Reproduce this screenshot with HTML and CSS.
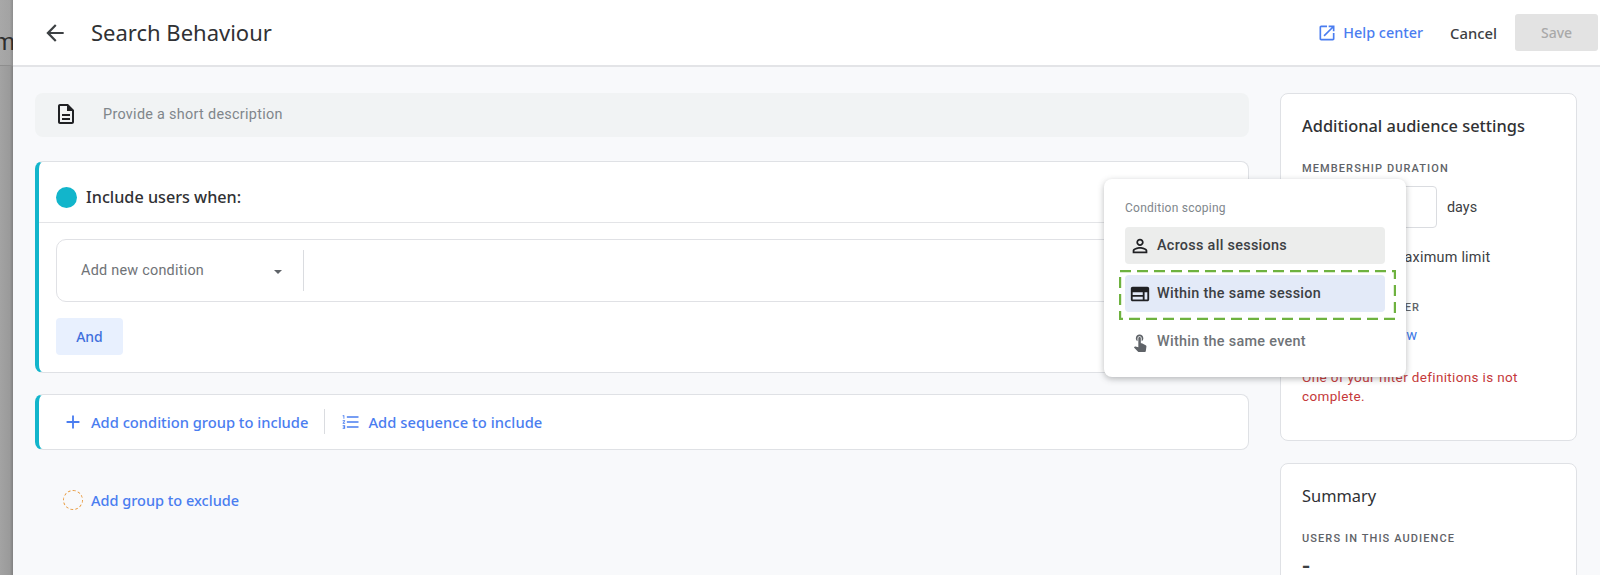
FILE: index.html
```html
<!DOCTYPE html>
<html lang="en">
<head>
  <meta charset="UTF-8" />
  <title>Search Behaviour</title>
  <link rel="stylesheet" href="styles.css">
</head>
<body>

  <!-- Page behind the panel -->
  <div class="scrim">
    <div class="scrim-top"><span>m</span></div>
  </div>

  <div class="panel">
    <header class="topbar">
      <svg class="back-icon" viewBox="0 0 24 24"><path d="M20 11H7.83l5.59-5.59L12 4l-8 8 8 8 1.41-1.41L7.83 13H20v-2z"/></svg>
      <h1>Search Behaviour</h1>
      <a class="help">
        <svg viewBox="0 0 24 24"><path d="M19 19H5V5h7V3H5c-1.11 0-2 .9-2 2v14c0 1.1.89 2 2 2h14c1.1 0 2-.9 2-2v-7h-2v7zM14 3v2h3.59l-9.83 9.83 1.41 1.41L19 6.41V10h2V3h-7z"/></svg>
        Help center
      </a>
      <span class="cancel">Cancel</span>
      <span class="save">Save</span>
    </header>

    <div class="content">
      <div class="builder">
        <div class="description">
          <svg viewBox="0 0 24 24"><path d="M8 16h8v2H8zm0-4h8v2H8zm6-10H6c-1.1 0-2 .9-2 2v16c0 1.1.89 2 1.99 2H18c1.1 0 2-.9 2-2V8l-6-6zm4 18H6V4h7v5h5v11z"/></svg>
          <span>Provide a short description</span>
        </div>

        <section class="group">
          <div class="group-head">
            <i class="dot"></i>
            <span>Include users when:</span>
          </div>
          <div class="group-body">
            <div class="condition">
              <div class="condition-select">
                <span>Add new condition</span>
                <i class="caret"></i>
              </div>
            </div>
            <span class="and">And</span>
          </div>
        </section>

        <section class="group add-row">
          <a class="link">
            <svg viewBox="0 0 24 24"><path d="M19 13h-6v6h-2v-6H5v-2h6V5h2v6h6v2z"/></svg>
            Add condition group to include
          </a>
          <i class="add-sep"></i>
          <a class="link seq">
            <svg class="list-icon" viewBox="0 0 24 24"><path d="M2 17h2v.5H3v1h1v.5H2v1h3v-4H2v1zm1-9h1V4H2v1h1v3zm-1 3h1.8L2 13.1v.9h3v-1H3.2L5 10.9V10H2v1zm5-6v2h14V5H7zm0 14h14v-2H7v2zm0-6h14v-2H7v2z"/></svg>
            Add sequence to include
          </a>
        </section>

        <a class="link exclude">
          <i class="dashed-dot"></i>
          Add group to exclude
        </a>
      </div>

      <aside class="side">
        <div class="card settings">
          <h2>Additional audience settings</h2>
          <div class="label">MEMBERSHIP DURATION</div>
          <div class="duration">
            <i class="duration-input"></i>
            <span>days</span>
          </div>
          <div class="limit">Set to maximum limit</div>
          <div class="label trigger">AUDIENCE TRIGGER</div>
          <a class="create">Create new</a>
          <p class="error">One of your filter definitions is not complete.</p>
        </div>
        <div class="card summary">
          <h2>Summary</h2>
          <div class="label">USERS IN THIS AUDIENCE</div>
          <div class="count">-</div>
        </div>
      </aside>
    </div>
  </div>

  <!-- Scoping menu -->
  <div class="menu">
    <div class="menu-title">Condition scoping</div>
    <div class="menu-item muted-bg">
      <svg viewBox="0 0 24 24"><path d="M12 5.9c1.16 0 2.1.94 2.1 2.1s-.94 2.1-2.1 2.1S9.9 9.16 9.9 8s.94-2.1 2.1-2.1m0 9c2.97 0 6.1 1.46 6.1 2.1v1.1H5.9V17c0-.64 3.13-2.1 6.1-2.1M12 4C9.79 4 8 5.79 8 8s1.79 4 4 4 4-1.79 4-4-1.79-4-4-4zm0 9c-2.67 0-8 1.34-8 4v3h16v-3c0-2.66-5.33-4-8-4z"/></svg>
      Across all sessions
    </div>
    <div class="menu-item selected">
      <svg viewBox="0 0 24 24"><path fill-rule="evenodd" d="M4 4h16c1.1 0 2 .9 2 2v12c0 1.1-.9 2-2 2H4c-1.1 0-2-.9-2-2V6c0-1.1.9-2 2-2zm0 6v3h11v-3H4zm0 5v3h11v-3H4zm13-5v8h3v-8h-3z"/></svg>
      Within the same session
    </div>
    <div class="menu-item faded">
      <svg viewBox="0 0 24 24"><path d="M9 11.24V7.5C9 6.12 10.12 5 11.5 5S14 6.12 14 7.5v3.74c1.21-.81 2-2.18 2-3.74C16 5.01 13.99 3 11.5 3S7 5.01 7 7.5c0 1.56.79 2.93 2 3.74zm9.84 4.63l-4.54-2.26c-.17-.07-.35-.11-.54-.11H13v-6c0-.83-.67-1.5-1.5-1.5S10 6.67 10 7.5v10.74l-3.43-.72c-.08-.01-.15-.03-.24-.03-.31 0-.59.13-.79.33l-.79.8 4.94 4.94c.27.27.65.44 1.06.44h6.79c.75 0 1.33-.55 1.44-1.28l.75-5.27c.01-.07.02-.14.02-.2 0-.62-.38-1.16-.91-1.38z"/></svg>
      Within the same event
    </div>
  </div>

  <!-- Green highlight drawn over the screenshot -->
  <svg class="highlight" viewBox="0 0 277 50">
    <rect x="1" y="1" width="275" height="48" stroke-dasharray="11 6" />
  </svg>

</body>
</html>
```

FILE: styles.css
```css
html, body {
  height: 100%;
}

body {
  font-family: 'Roboto', sans-serif;
  margin: 0;
  padding: 0;
  display: flex;
  overflow: hidden;
  color: #3c4043;
}

a { display: block; }
i { display: block; }

svg {
  fill: currentColor;
  flex: none;
}

.scrim {
  width: 13px;
  flex: none;
  background: linear-gradient(to right, #a3a3a3, #9a9a9a 75%, #808080);
  overflow: hidden;
}

.scrim-top {
  height: 65px;
  border-bottom: 1px solid #8e8e8e;
  background: linear-gradient(to right, #a8a8a8, #a3a3a3 75%, #8c8c8c);
  font-size: 24px;
  line-height: 84px;
  color: #2e2e2e;
  text-indent: -6px;
}

.panel {
  flex: 1;
  min-width: 0;
  background: #f8f9fb;
}

.topbar {
  height: 65px;
  background: white;
  border-bottom: 2px solid #e3e4e7;
  display: flex;
  align-items: center;
  color: #202124;
}

.back-icon {
  width: 26px;
  height: 26px;
  margin-left: 29px;
  color: #3c4043;
}

h1 {
  font-family: 'Noto Sans', sans-serif;
  font-size: 22px;
  font-weight: 400;
  margin: 0 0 2px 23px;
  color: #303134;
}

.help {
  display: flex;
  align-items: center;
  gap: 6px;
  margin-left: auto;
  font-family: 'Noto Sans', sans-serif;
  font-size: 14.4px;
  font-weight: 500;
  color: #4a7df0;
}

.help svg {
  width: 20px;
  height: 20px;
}

.cancel {
  font-family: 'Noto Sans', sans-serif;
  font-size: 14.8px;
  font-weight: 500;
  margin-left: 27px;
  color: #3c4043;
}

.save {
  width: 83px;
  height: 37px;
  line-height: 37px;
  margin: 0 2px 0 18px;
  text-align: center;
  background: #e3e3e3;
  border-radius: 3px;
  color: #a9a9a9;
  font-family: 'Noto Sans', sans-serif;
  font-size: 14px;
  font-weight: 500;
}

.content {
  display: flex;
  padding: 26px 23px 0 22px;
  gap: 31px;
}

.builder {
  width: 1214px;
  flex: none;
}

.description {
  height: 44px;
  border-radius: 8px;
  background: #f1f3f4;
  display: flex;
  align-items: center;
  padding: 0 0 2px 19px;
  box-sizing: border-box;
  font-size: 14.4px;
  letter-spacing: .3px;
  color: #80868b;
}

.description svg {
  width: 24px;
  height: 24px;
  margin-right: 25px;
  color: #202124;
}

.group {
  margin-top: 24px;
  background: white;
  border: 1px solid #dfe1e5;
  border-left: 4px solid #12b5cb;
  border-radius: 8px;
}

.group-head {
  height: 61px;
  box-sizing: border-box;
  border-bottom: 1px solid #e3e4e7;
  display: flex;
  align-items: center;
  padding: 10px 0 0 17px;
  gap: 9px;
  font-family: 'Noto Sans', sans-serif;
  font-size: 16.2px;
  font-weight: 500;
  color: #303134;
}

.dot {
  width: 21px;
  height: 21px;
  border-radius: 50%;
  background: #12b5cb;
}

.group-body {
  padding: 16px 17px 10px;
  height: 123px;
}

.condition {
  height: 61px;
  border: 1px solid #e0e1e5;
  border-radius: 10px;
  display: flex;
  align-items: center;
}

.condition-select {
  width: 247px;
  height: 41px;
  box-sizing: border-box;
  border-right: 1px solid #dadce0;
  display: flex;
  align-items: center;
  justify-content: space-between;
  padding: 0 21px 0 24px;
  font-size: 14.4px;
  letter-spacing: .25px;
  color: #6f7377;
}

.caret {
  width: 0;
  height: 0;
  border-left: 4px solid transparent;
  border-right: 4px solid transparent;
  border-top: 4px solid #5f6368;
  margin-top: 2px;
}

.and {
  display: block;
  width: 67px;
  height: 37px;
  line-height: 37px;
  margin-top: 16px;
  text-align: center;
  background: #e8f0fe;
  border-radius: 4px;
  color: #3f6fdc;
  font-family: 'Noto Sans', sans-serif;
  font-size: 14px;
  font-weight: 500;
}

.add-row {
  margin-top: 21px;
  height: 56px;
  box-sizing: border-box;
  display: flex;
  align-items: center;
  padding: 0 0 1px 23px;
}

.link {
  display: flex;
  align-items: center;
  gap: 7px;
  font-family: 'Noto Sans', sans-serif;
  font-size: 14.7px;
  font-weight: 500;
  color: #4a7df0;
}

.link svg {
  width: 22px;
  height: 22px;
}

.link .list-icon {
  width: 20px;
  height: 20px;
}

.seq {
  letter-spacing: .08px;
}

.add-sep {
  width: 1px;
  height: 25px;
  background: #dadce0;
  margin: 0 16px;
}

.exclude {
  margin: 40px 0 0 28px;
  gap: 8px;
  font-size: 14.5px;
}

.dashed-dot {
  width: 20px;
  height: 20px;
  box-sizing: border-box;
  border: 1.5px dashed #e8983a;
  border-radius: 50%;
}

.side {
  width: 297px;
  flex: none;
}

.card {
  background: white;
  border: 1px solid #dfe1e5;
  border-radius: 8px;
  padding: 0 21px;
  box-sizing: border-box;
}

.settings {
  height: 348px;
}

.summary {
  height: 200px;
  margin-top: 22px;
}

h2 {
  font-family: 'Noto Sans', sans-serif;
  font-size: 16.4px;
  font-weight: 500;
  margin: 0;
  color: #303134;
}

.settings h2 {
  padding-top: 20px;
}

.summary h2 {
  padding-top: 20px;
  font-weight: 400;
}

.label {
  font-size: 11px;
  font-weight: 500;
  letter-spacing: 1.1px;
  color: #5f6368;
  margin-top: 25px;
}

.duration {
  display: flex;
  align-items: center;
  gap: 10px;
  margin-top: 11px;
  font-size: 14.4px;
}

.duration-input {
  width: 135px;
  height: 42px;
  box-sizing: border-box;
  border: 1px solid #dadce0;
  border-radius: 4px;
}

.limit {
  font-size: 14.4px;
  letter-spacing: .25px;
  padding-left: 47px;
  margin-top: 21px;
}

.trigger {
  margin-top: 35px;
  padding-left: 1px;
}

.create {
  font-size: 14.4px;
  letter-spacing: .25px;
  color: #3b78e7;
  margin-top: 13px;
  padding-left: 41px;
}

.error {
  margin: 24px 0 0;
  font-size: 13.5px;
  line-height: 19px;
  letter-spacing: .35px;
  color: #c5393a;
}

.count {
  font-size: 24px;
  font-weight: 500;
  line-height: 16px;
  margin-top: 13px;
}

.menu {
  position: absolute;
  left: 1104px;
  top: 179px;
  width: 302px;
  height: 198px;
  box-sizing: border-box;
  background: white;
  border-radius: 8px;
  box-shadow: 0 2px 6px rgba(60, 64, 67, .35);
  padding: 21px 21px 0;
}

.menu-title {
  font-size: 12px;
  letter-spacing: .25px;
  line-height: 16px;
  margin-bottom: 11px;
  color: #80868b;
}

.menu-item {
  height: 37px;
  margin-bottom: 11px;
  border-radius: 4px;
  display: flex;
  align-items: center;
  gap: 6px;
  padding-left: 4px;
  box-sizing: border-box;
  font-size: 14.4px;
  font-weight: 500;
  letter-spacing: .3px;
  color: #3c4043;
}

.menu-item svg {
  width: 22px;
  height: 22px;
  color: #202124;
}

.muted-bg { background: #ecedec; }
.selected { background: #e3eaf8; }
.faded { color: #6f7377; }

.faded svg {
  width: 20px;
  height: 20px;
  margin: 0 1px;
  color: #5f6368;
}

.highlight {
  position: absolute;
  left: 1119px;
  top: 270px;
  width: 277px;
  height: 50px;
  fill: none;
  stroke: #6eb23f;
  stroke-width: 2.4;
}
```
